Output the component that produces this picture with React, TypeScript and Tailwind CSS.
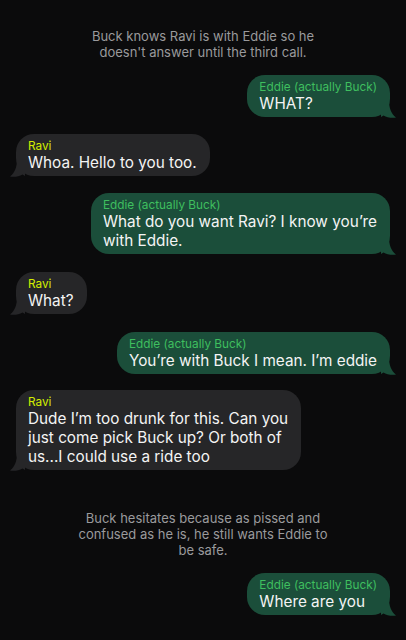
import React from "react";

type Msg =
  | { kind: "note"; text: string; mt: string }
  | { kind: "me" | "them"; name: string; text: string; mt: string };

// bubble lines are broken by hand so the bubbles shrink to their text like iMessage does
const thread: Msg[] = [
  { kind: "note", text: "Buck knows Ravi is with Eddie so he doesn't answer until the third call.", mt: "mt-[28px]" },
  { kind: "me", name: "Eddie (actually Buck)", text: "WHAT?", mt: "mt-[15px]" },
  { kind: "them", name: "Ravi", text: "Whoa. Hello to you too.", mt: "mt-[17px]" },
  { kind: "me", name: "Eddie (actually Buck)", text: "What do you want Ravi? I know you\u2019re\nwith Eddie.", mt: "mt-[17px]" },
  { kind: "them", name: "Ravi", text: "What?", mt: "mt-[18px]" },
  { kind: "me", name: "Eddie (actually Buck)", text: "You\u2019re with Buck I mean. I\u2019m eddie", mt: "mt-[18px]" },
  { kind: "them", name: "Ravi", text: "Dude I\u2019m too drunk for this. Can you\njust come pick Buck up? Or both of\nus...I could use a ride too", mt: "mt-[16px]" },
  { kind: "note", text: "Buck hesitates because as pissed and confused as he is, he still wants Eddie to be safe.", mt: "mt-[40px]" },
  { kind: "me", name: "Eddie (actually Buck)", text: "Where are you", mt: "mt-[15px]" },
];

// little iOS-style tail, drawn for the right side and mirrored for the left
function Tail({ side, fill }: { side: "left" | "right"; fill: string }) {
  return (
    <svg
      width="16"
      height="18"
      viewBox="0 0 16 18"
      className={
        side === "right"
          ? "absolute -right-[7px] -bottom-[1px]"
          : "absolute -left-[7px] -bottom-[1px] -scale-x-100"
      }
    >
      <path d="M0 0 H8 C8 8 10 13.5 15 17.6 C10 18.2 5.5 17.2 2.5 15.4 L0 17 Z" fill={fill} />
    </svg>
  );
}

function Bubble({ msg }: { msg: Extract<Msg, { kind: "me" | "them" }> }) {
  const mine = msg.kind === "me";
  return (
    <div className={`flex ${mine ? "justify-end" : "justify-start"} ${msg.mt}`}>
      <div
        className={`relative rounded-[18px] pl-[12px] pr-[13px] pt-[5px] pb-[4px] ${
          mine ? "bg-[#1b4e3a]" : "bg-[#262628]"
        }`}
      >
        <Tail side={mine ? "right" : "left"} fill={mine ? "#1b4e3a" : "#262628"} />
        <div
          className={`relative text-[11.8px] leading-[14px] ${
            mine ? "text-[#3fbf5f]" : "text-[#d2ee00]"
          }`}
        >
          {msg.name}
        </div>
        <div className="relative whitespace-pre-line text-[15.3px] leading-[19px] text-[#f4f4f4]">
          {msg.text}
        </div>
      </div>
    </div>
  );
}

export default function App() {
  return (
    <div className="flex min-h-[640px] w-full flex-col bg-[#0b0b0c] px-4 pb-6 font-['Inter',sans-serif] antialiased">
      {thread.map((m, i) =>
        m.kind === "note" ? (
          <p
            key={i}
            className={`mx-auto max-w-[262px] text-center text-[13px] leading-[16px] text-[#9a9a9c] ${m.mt}`}
          >
            {m.text}
          </p>
        ) : (
          <Bubble key={i} msg={m} />
        )
      )}
    </div>
  );
}
